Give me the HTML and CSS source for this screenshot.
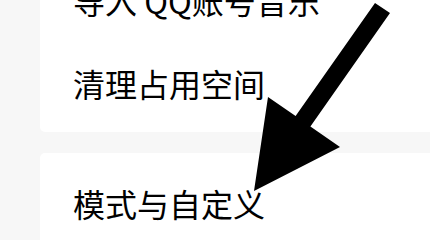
FILE: index.html
```html
<!DOCTYPE html>
<html lang="zh-CN">
<head>
  <meta charset="UTF-8" />
  <meta name="viewport" content="width=device-width, initial-scale=1.0"/>
  <title>设置</title>
  <link rel="stylesheet" href="styles.css">
</head>
<body>
  <div class="page">
    <div class="card">
      <div class="row">导入 QQ账号音乐</div>
      <div class="row">清理占用空间</div>
    </div>
    <div class="card card-last">
      <div class="row">模式与自定义</div>
    </div>

    <!-- annotation arrow drawn over the list -->
    <svg class="arrow" width="430" height="240" viewBox="0 0 430 240">
      <polygon points="375,3 390,13 310.4,126.4 340,147 254,191 268,97 295.6,116.1" fill="#000"/>
    </svg>
  </div>
</body>
</html>
```

FILE: styles.css
```css
* {
  box-sizing: border-box;
}
html, body {
  margin: 0;
  height: 100%;
  overflow: hidden;
}
body {
  font-family: "Noto Sans CJK SC", "Noto Sans", sans-serif;
  background-color: #f7f7f7;
  color: #000;
}
.page {
  position: relative;
  margin-top: -50px;
  padding-left: 40px;
  height: 100%;
}
.card {
  background-color: #fff;
  border-radius: 5px;
  margin-right: -20px;
  padding: 8px 0;
  margin-bottom: 21px;
}
.card-last {
  padding-bottom: 40px;
}
.row {
  height: 83px;
  display: flex;
  align-items: center;
  padding-left: 33px;
  font-size: 32px;
}
.arrow {
  position: absolute;
  top: 50px;
  left: 0;
}
```
